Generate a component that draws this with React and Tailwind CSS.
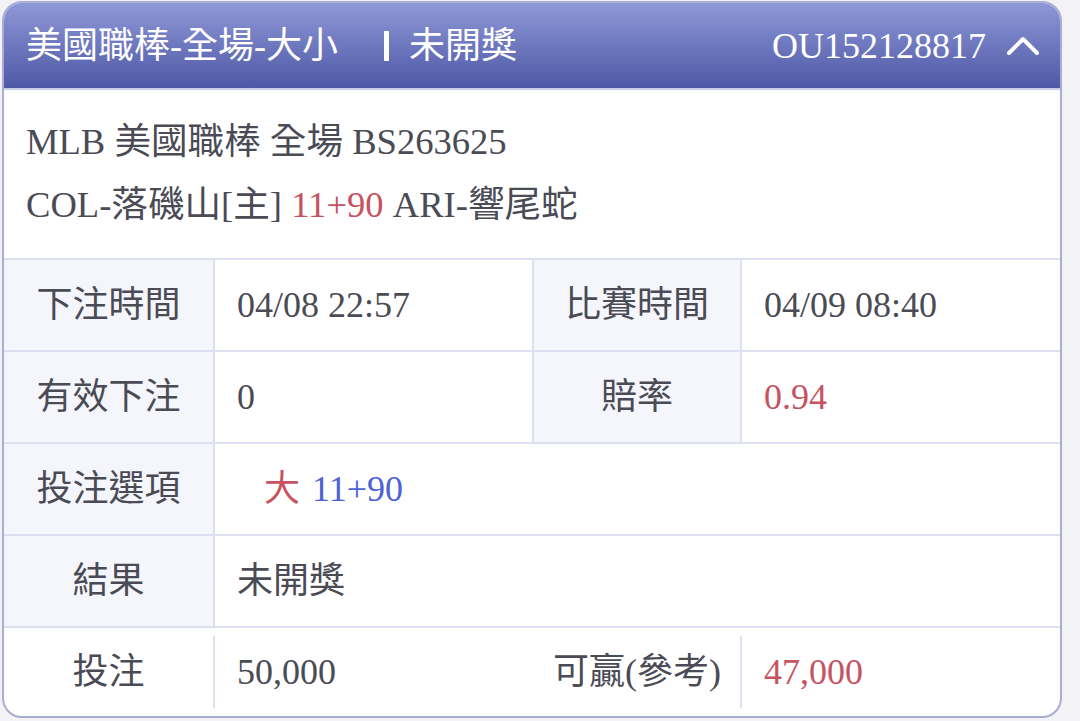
export default function App() {
  const font = "font-['Liberation_Serif','Noto_Sans_CJK_TC',serif]";
  const dark = "text-[#4a4b55]";
  const red = "text-[#c6535f]";
  const blue = "text-[#4c62d6]";
  const line = "border-[#dde0f1]";

  return (
    <div className={`min-h-screen bg-[#f3f3f5] pt-px pl-[2px] ${font}`}>
      <div className="w-[1060px] rounded-[20px] border-2 border-[#a9add6] overflow-hidden bg-white flex flex-col">
        {/* Header */}
        <div className="h-[85px] bg-gradient-to-b from-[#8f98d7] to-[#4f58a5] flex items-center pl-[22px] pr-[20px] text-white">
          <span className="text-[36px] leading-none">美國職棒-全場-大小</span>
          <span className="ml-[46px] w-[5px] h-[30px] bg-white" />
          <span className="ml-[20px] text-[36px] leading-none">未開獎</span>
          <span className="ml-auto text-[36px] leading-none">OU152128817</span>
          <svg
            className="ml-[20px]"
            width="34"
            height="22"
            viewBox="0 0 34 22"
            fill="none"
            stroke="white"
            strokeWidth="4"
            strokeLinecap="round"
            strokeLinejoin="round"
          >
            <path d="M3 18 L17 4 L31 18" />
          </svg>
        </div>

        {/* Match info */}
        <div className={`h-[170px] border-t-2 border-[#c9cdea] pt-[20px] pl-[22px] text-[36.6px] leading-[63px] ${dark}`}>
          <div>MLB 美國職棒 全場 BS263625</div>
          <div>
            COL-落磯山[主] <span className={red}>11+90</span> ARI-響尾蛇
          </div>
        </div>

        {/* Table */}
        <div className={`text-[36px] ${dark}`}>
          <div className={`flex h-[92px] border-t-2 ${line}`}>
            <div className="w-[209px] bg-[#f5f6fb] flex items-center justify-center">下注時間</div>
            <div className={`w-[319px] border-l-2 ${line} flex items-center pl-[22px]`}>04/08 22:57</div>
            <div className={`w-[208px] border-l-2 ${line} bg-[#f5f6fb] flex items-center justify-center`}>比賽時間</div>
            <div className={`flex-1 border-l-2 ${line} flex items-center pl-[22px]`}>04/09 08:40</div>
          </div>
          <div className={`flex h-[92px] border-t-2 ${line}`}>
            <div className="w-[209px] bg-[#f5f6fb] flex items-center justify-center">有效下注</div>
            <div className={`w-[319px] border-l-2 ${line} flex items-center pl-[22px]`}>0</div>
            <div className={`w-[208px] border-l-2 ${line} bg-[#f5f6fb] flex items-center justify-center`}>賠率</div>
            <div className={`flex-1 border-l-2 ${line} flex items-center pl-[22px] ${red}`}>0.94</div>
          </div>
          <div className={`flex h-[92px] border-t-2 ${line}`}>
            <div className="w-[209px] bg-[#f5f6fb] flex items-center justify-center">投注選項</div>
            <div className={`flex-1 border-l-2 ${line} flex items-center pl-[49px]`}>
              <span className={red}>大</span>
              <span className={`ml-[12px] ${blue}`}>11+90</span>
            </div>
          </div>
          <div className={`flex h-[92px] border-t-2 ${line}`}>
            <div className="w-[209px] bg-[#f5f6fb] flex items-center justify-center">結果</div>
            <div className={`flex-1 border-l-2 ${line} flex items-center pl-[22px]`}>未開獎</div>
          </div>
          <div className={`flex h-[90px] border-t-2 ${line} items-center`}>
            <div className="w-[209px] flex items-center justify-center">投注</div>
            <span className="w-[2px] h-[72px] bg-[#dde0f1]" />
            <div className="w-[319px] pl-[22px]">50,000</div>
            <div className="w-[206px] flex justify-center">可贏(參考)</div>
            <span className="w-[2px] h-[72px] bg-[#dde0f1]" />
            <div className={`flex-1 pl-[22px] ${red}`}>47,000</div>
          </div>
        </div>
      </div>
    </div>
  );
}
